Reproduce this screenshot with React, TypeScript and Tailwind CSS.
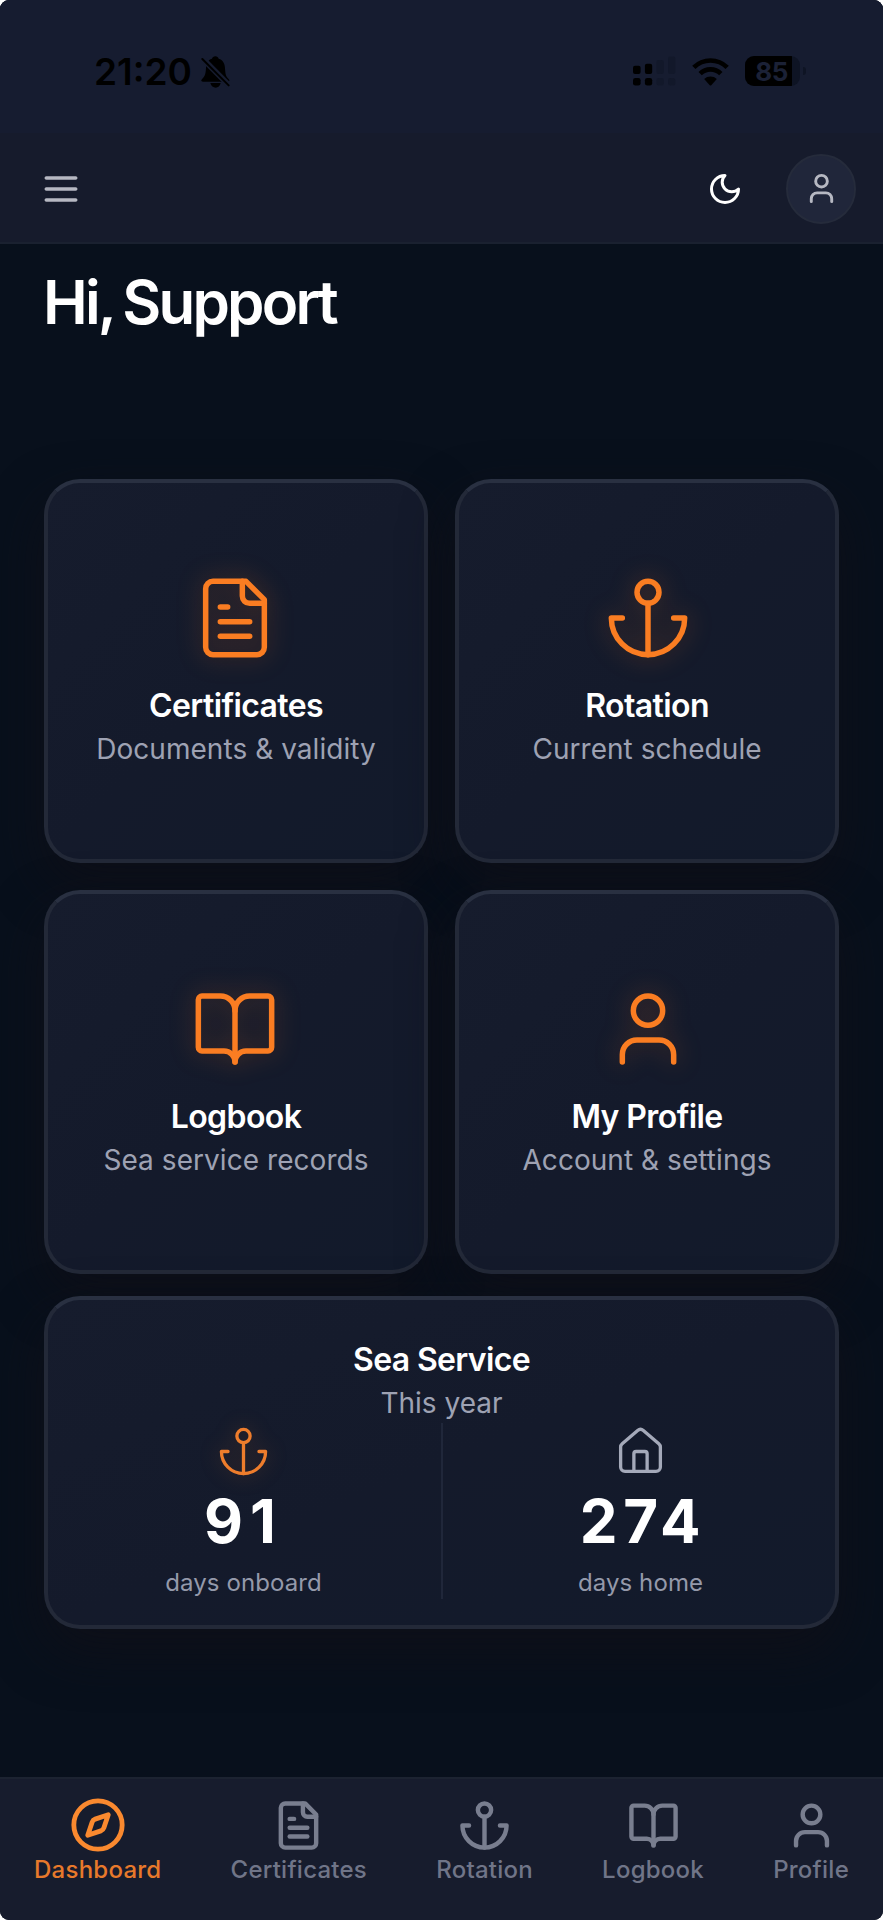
import React from 'react';

type IconProps = {
  className?: string;
  strokeWidth?: number;
};

const Icon: React.FC<IconProps & { children: React.ReactNode }> = ({
  className,
  strokeWidth = 2,
  children,
}) => (
  <svg
    viewBox="0 0 24 24"
    fill="none"
    stroke="currentColor"
    strokeWidth={strokeWidth}
    strokeLinecap="round"
    strokeLinejoin="round"
    className={className}
    aria-hidden="true"
  >
    {children}
  </svg>
);

const FileIcon: React.FC<IconProps> = (props) => (
  <Icon {...props}>
    <path d="M15 2H6a2 2 0 0 0-2 2v16a2 2 0 0 0 2 2h12a2 2 0 0 0 2-2V7Z" />
    <path d="M14 2v4a2 2 0 0 0 2 2h4" />
    <path d="M10 9H8" />
    <path d="M16 13H8" />
    <path d="M16 17H8" />
  </Icon>
);

const AnchorIcon: React.FC<IconProps> = (props) => (
  <Icon {...props}>
    <path d="M12 22V8" />
    <path d="M5 12H2a10 10 0 0 0 20 0h-3" />
    <circle cx="12" cy="5" r="3" />
  </Icon>
);

const BookIcon: React.FC<IconProps> = (props) => (
  <Icon {...props}>
    <path d="M12 7v14" />
    <path d="M3 18a1 1 0 0 1-1-1V4a1 1 0 0 1 1-1h5a4 4 0 0 1 4 4 4 4 0 0 1 4-4h5a1 1 0 0 1 1 1v13a1 1 0 0 1-1 1h-6a3 3 0 0 0-3 3 3 3 0 0 0-3-3z" />
  </Icon>
);

const UserIcon: React.FC<IconProps> = (props) => (
  <Icon {...props}>
    <path d="M19 21v-2a4 4 0 0 0-4-4H9a4 4 0 0 0-4 4v2" />
    <circle cx="12" cy="7" r="4" />
  </Icon>
);

const HouseIcon: React.FC<IconProps> = (props) => (
  <Icon {...props}>
    <path d="M15 21v-8a1 1 0 0 0-1-1h-4a1 1 0 0 0-1 1v8" />
    <path d="M3 10a2 2 0 0 1 .709-1.528l7-5.999a2 2 0 0 1 2.582 0l7 5.999A2 2 0 0 1 21 10v9a2 2 0 0 1-2 2H5a2 2 0 0 1-2-2z" />
  </Icon>
);

const CompassIcon: React.FC<IconProps> = (props) => (
  <Icon {...props}>
    <path d="m16.24 7.76-1.804 5.411a2 2 0 0 1-1.265 1.265L7.76 16.24l1.804-5.411a2 2 0 0 1 1.265-1.265z" />
    <circle cx="12" cy="12" r="10" />
  </Icon>
);

const MoonIcon: React.FC<IconProps> = (props) => (
  <Icon {...props}>
    <path d="M12 3a6 6 0 0 0 9 9 9 9 0 1 1-9-9Z" />
  </Icon>
);

const MenuIcon: React.FC<IconProps> = (props) => (
  <Icon {...props}>
    <path d="M4 6h16" />
    <path d="M4 12h16" />
    <path d="M4 18h16" />
  </Icon>
);

const StatusBar = () => (
  <div className="flex h-[133px] items-start justify-between bg-[#161c30] pr-[77px] pl-[94px] pt-[56px] text-black">
    <div className="flex items-start">
      <span className="w-[107px] text-[37px] leading-8 font-semibold">21:20</span>
      <svg viewBox="0 0 87 96" className="h-8 w-[29px]" aria-hidden="true">
        <path d="M43 1c-5 0-9 3-10 7C20 12 16 22 15 36c-1 18-3 24-11 32-5 5-4 9 2 9h74c6 0 7-4 2-9-8-8-9-14-10-32C71 22 66 12 53 8c-1-4-5-7-10-7Z" />
        <path d="M28 81h31c-2 9-8 14-15 14s-14-5-16-14Z" />
        <path d="M-2 1 90 94" stroke="#161c30" strokeWidth="17" />
        <path d="M4 9 83 88" stroke="currentColor" strokeWidth="6" strokeLinecap="round" />
      </svg>
    </div>
    <div className="flex items-start">
      <svg viewBox="0 0 130 90" className="h-[30px] w-[43px]" aria-hidden="true">
        <rect x="0" y="29" width="23" height="25" rx="6" />
        <rect x="0" y="66" width="23" height="23" rx="7" />
        <rect x="36" y="23" width="22" height="31" rx="6" />
        <rect x="36" y="66" width="22" height="23" rx="7" />
        <g fill="#12182a">
          <rect x="71" y="12" width="22" height="42" rx="6" />
          <rect x="71" y="66" width="22" height="23" rx="7" />
          <rect x="106" y="1" width="22" height="53" rx="6" />
          <rect x="106" y="66" width="22" height="23" rx="7" />
        </g>
      </svg>
      <svg viewBox="0 0 110 84" className="mt-[1.5px] ml-[16px] h-7 w-[37px]" aria-hidden="true">
        <g fill="none" stroke="currentColor" strokeWidth="14">
          <path d="M5 28a71 71 0 0 1 100 0" />
          <path d="M24 47a44 44 0 0 1 62 0" />
        </g>
        <path d="M36 63a28 28 0 0 1 38 0L58 81q-3 3-6 0Z" />
      </svg>
      <div className="ml-[16px] flex items-center">
        <div className="flex h-[30px] w-[55px] items-center overflow-hidden rounded-[9px] bg-[#0e1424]">
          <span className="flex h-full w-[47px] items-center justify-center bg-black pl-[6px] text-[26px] font-bold tracking-[-0.5px] text-[#1b2136]">
            85
          </span>
        </div>
        <span className="ml-[3px] h-2 w-[3px] rounded-r-full bg-[#0e1424]" />
      </div>
    </div>
  </div>
);

const Header = () => (
  <header className="h-[244px] border-b-2 border-[#1a2130] bg-[#161b2c]">
    <StatusBar />
    <div className="flex h-[109px] items-center justify-between pt-0.5 pr-[27px] pl-[39px]">
      <button type="button" aria-label="Open menu">
        <MenuIcon className="size-11 text-[#b6b8c2]" />
      </button>
      <div className="flex items-center gap-[43.5px]">
        <button type="button" aria-label="Toggle theme">
          <MoonIcon className="size-9 text-white" />
        </button>
        <button
          type="button"
          aria-label="Account"
          className="flex size-[70px] items-center justify-center rounded-full border-2 border-[#252b3b] bg-[#20263a]"
        >
          <UserIcon className="size-[35px] text-[#b6b8c2]" />
        </button>
      </div>
    </div>
  </header>
);

const cardClass =
  'rounded-[36px] border-4 border-[#232938] border-t-[#293041] bg-linear-to-br from-[#161c2d] via-[#141a2b] to-[#121a2b] shadow-[0_22px_52px_rgba(15,15,23,0.85)]';

const tiles = [
  { title: 'Certificates', subtitle: 'Documents & validity', icon: FileIcon },
  { title: 'Rotation', subtitle: 'Current schedule', icon: AnchorIcon },
  { title: 'Logbook', subtitle: 'Sea service records', icon: BookIcon },
  { title: 'My Profile', subtitle: 'Account & settings', icon: UserIcon },
];

const SeaService = () => (
  <section className={`relative mt-[22px] h-[333px] pt-[39px] ${cardClass}`}>
    <h2 className="text-center text-[32px] leading-[42px] font-semibold tracking-[-0.66px] text-white">
      Sea Service
    </h2>
    <p className="mt-0.5 text-center text-[28px] leading-[40px] text-[#9ea2b3]">This year</p>
    <div className="flex h-[176px] pl-px">
      <div className="flex flex-1 flex-col items-center pr-[3px] pt-[2px]">
        <AnchorIcon
          strokeWidth={1.5}
          className="size-[53px] text-[#ee7d2c] drop-shadow-[0_0_10px_rgba(249,115,22,0.25)]"
        />
        <span className="mt-[10px] text-[60px] leading-[66px] font-bold tracking-[7px] text-white">91</span>
        <span className="mt-[13px] text-2xl tracking-[0.1px] text-[#9499aa]">days onboard</span>
      </div>
      <div className="w-0.5 bg-[#20273a]" />
      <div className="flex flex-1 flex-col items-center pl-[3px] pt-[2px]">
        <HouseIcon strokeWidth={1.5} className="size-[53px] text-[#a4a9b9]" />
        <span className="mt-[10px] pl-[5px] text-[60px] leading-[66px] font-bold tracking-[5.5px] text-white">274</span>
        <span className="mt-[13px] text-2xl tracking-[0.1px] text-[#9499aa]">days home</span>
      </div>
    </div>
  </section>
);

const tabs = [
  { label: 'Dashboard', icon: CompassIcon, active: true },
  { label: 'Certificates', icon: FileIcon },
  { label: 'Rotation', icon: AnchorIcon },
  { label: 'Logbook', icon: BookIcon },
  { label: 'Profile', icon: UserIcon },
];

const TabBar = () => (
  <nav className="flex h-[143px] justify-between border-t-2 border-[#1c2331] bg-[#171c2d] px-[34px] pt-[16px]">
    {tabs.map(({ label, icon: TabIcon, active }) => (
      <a
        key={label}
        href="#"
        className={`flex flex-col items-center ${active ? 'text-[#e8792b]' : 'text-[#707588]'}`}
      >
        <span className="flex h-[60px] items-center">
          <TabIcon className={active ? 'size-[58px] text-[#fa892f]' : 'size-[53px] text-[#797e8f]'} />
        </span>
        <span className="text-2xl leading-[30px] font-medium tracking-[0.25px]">{label}</span>
      </a>
    ))}
  </nav>
);

export default function App() {
  return (
    <div className="h-[1920px] w-[883px] bg-white font-['Inter',sans-serif]">
      <div className="flex h-full flex-col overflow-hidden rounded-[9px] bg-[#08101c]">
        <Header />
        <main className="flex-1 px-[44px] pt-[25px]">
          <h1 className="-ml-px h-[210px] text-[60px] leading-[66px] font-semibold tracking-[-2.8px] text-white [word-spacing:-3px]">
            Hi, Support
          </h1>
          <div className="grid grid-cols-2 gap-[27px]">
            {tiles.map(({ title, subtitle, icon: TileIcon }) => (
              <a
                key={title}
                href="#"
                className={`group flex h-[384px] flex-col items-center justify-center ${cardClass}`}
              >
                <TileIcon
                  strokeWidth={1.5}
                  className="size-[88px] text-[#fa7d22] drop-shadow-[0_0_12px_rgba(249,115,22,0.3)] group-odd:mr-0.5 group-even:ml-0.5"
                />
                <h2 className="mt-[23px] text-[32px] leading-[42px] font-semibold tracking-[-0.6px] text-white">
                  {title}
                </h2>
                <p className="mt-0.5 text-[28px] leading-[40px] tracking-[0.05px] text-[#9ea2b3]">{subtitle}</p>
              </a>
            ))}
          </div>
          <SeaService />
        </main>
        <TabBar />
      </div>
    </div>
  );
}
